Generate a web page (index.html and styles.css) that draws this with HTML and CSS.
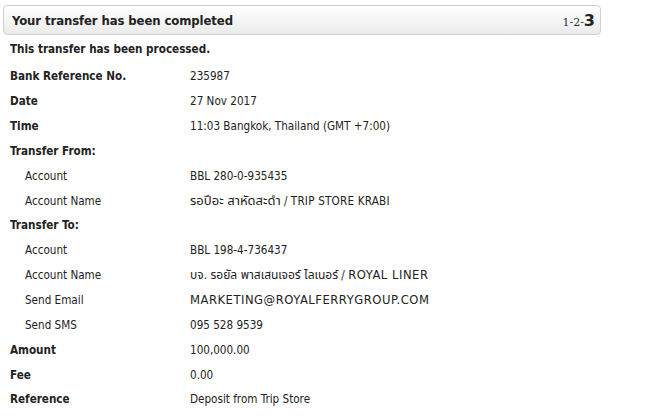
FILE: index.html
```html
<!DOCTYPE html>
<html>
<head>
<meta charset="utf-8">
<link rel="stylesheet" href="styles.css">
</head>
<body>
<div class="page">
  <div class="header">
    <span class="title">Your transfer has been completed</span>
    <span class="steps"><span class="done">1-2-</span><span class="cur">3</span></span>
  </div>
  <div class="note">This transfer has been processed.</div>
  <div class="rows">
    <div class="row"><span class="label b">Bank Reference No.</span><span class="val">235987</span></div>
    <div class="row"><span class="label b">Date</span><span class="val">27 Nov 2017</span></div>
    <div class="row"><span class="label b">Time</span><span class="val">11:03 Bangkok, Thailand (GMT +7:00)</span></div>
    <div class="row"><span class="label b">Transfer From:</span><span class="val"></span></div>
    <div class="row"><span class="label sub">Account</span><span class="val">BBL 280-0-935435</span></div>
    <div class="row"><span class="label sub">Account Name</span><span class="val"><span class="th th-a">รอปีอะ สาหัดสะดำ</span> / <span class="caps">TRIP STORE KRABI</span></span></div>
    <div class="row"><span class="label b">Transfer To:</span><span class="val"></span></div>
    <div class="row"><span class="label sub">Account</span><span class="val">BBL 198-4-736437</span></div>
    <div class="row"><span class="label sub">Account Name</span><span class="val"><span class="th th-b">บจ. รอยัล พาสเสนเจอร์ ไลเนอร์</span> / <span class="wide">ROYAL LINER</span></span></div>
    <div class="row"><span class="label sub">Send Email</span><span class="val"><span class="wide">MARKETING@ROYALFERRYGROUP.COM</span></span></div>
    <div class="row"><span class="label sub">Send SMS</span><span class="val">095 528 9539</span></div>
    <div class="row"><span class="label b">Amount</span><span class="val">100,000.00</span></div>
    <div class="row"><span class="label b">Fee</span><span class="val">0.00</span></div>
    <div class="row"><span class="label b">Reference</span><span class="val">Deposit from Trip Store</span></div>
  </div>
</div>
</body>
</html>
```
FILE: styles.css
```css
html, body {
  margin: 0;
  padding: 0;
  background: #ffffff;
}
body {
  font-family: "DejaVu Sans Condensed", "DejaVu Sans", Verdana, sans-serif;
  font-stretch: semi-condensed;
  font-size: 11.6px;
  color: #222;
}
.page {
  padding: 5px 0 0 3px;
  width: 598px;
}
.header {
  height: 28px;
  border: 1px solid #cfcfcf;
  border-radius: 4px;
  background: linear-gradient(#ffffff, #ebebeb);
  display: flex;
  align-items: center;
  justify-content: space-between;
  padding: 0 5px 0 8px;
}
.title {
  font-weight: bold;
  font-size: 13px;
  letter-spacing: -0.1px;
  color: #222;
}
.steps {
  display: flex;
  align-items: baseline;
}
.done {
  font-family: "DejaVu Serif", Georgia, serif;
  font-stretch: normal;
  font-size: 11px;
  color: #333;
}
.cur {
  font-family: "DejaVu Sans", Verdana, sans-serif;
  font-stretch: normal;
  font-weight: bold;
  font-size: 16px;
  color: #222;
}
.note {
  font-weight: bold;
  padding: 7px 0 0 7px;
  height: 22px;
}
.rows {
  display: flex;
  flex-direction: column;
}
.row {
  display: flex;
  height: 24.85px;
  align-items: center;
}
.label {
  width: 187px;
  padding-left: 7px;
  box-sizing: border-box;
  flex-shrink: 0;
}
.label.b { font-weight: bold; }
.label.sub { padding-left: 22px; }
.val {
  font-family: "DejaVu Sans Condensed", "DejaVu Sans", "Noto Sans Thai", sans-serif;
  white-space: nowrap;
}
.th-a {
  font-size: 13px;
}
.th-b {
  font-size: 12px;
}
.caps {
  letter-spacing: 0.2px;
}
.wide {
  font-family: "DejaVu Sans", Verdana, sans-serif;
  font-stretch: normal;
  letter-spacing: 0.5px;
}
```
